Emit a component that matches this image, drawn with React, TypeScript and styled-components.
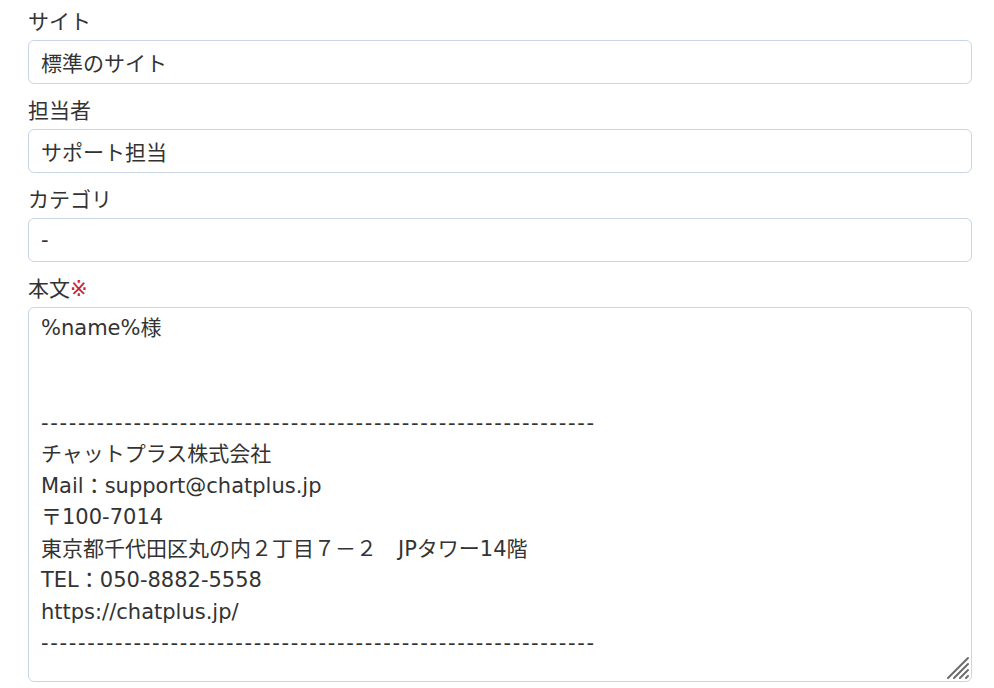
import React from 'react';
import styled, {createGlobalStyle} from 'styled-components';

const DASHES = '-'.repeat(60);

const BODY_LINES = [
  '%name%様',
  '',
  '',
  DASHES,
  'チャットプラス株式会社',
  'Mail：support@chatplus.jp',
  '〒100-7014',
  '東京都千代田区丸の内２丁目７－２　JPタワー14階',
  'TEL：050-8882-5558',
  'https://chatplus.jp/',
  DASHES,
];

const GlobalStyle = createGlobalStyle`
  html, body {
    margin: 0;
    background: #fff;
  }
  body {
    font-family: "DejaVu Sans", "Noto Sans CJK JP", sans-serif;
    color: #333;
  }
`;

export default function App() {
  return (
    <>
      <GlobalStyle/>
      <Form>
        <Field>
          <Label>サイト</Label>
          <Input readOnly value="標準のサイト"/>
        </Field>
        <Field>
          <Label>担当者</Label>
          <Input readOnly value="サポート担当"/>
        </Field>
        <Field>
          <Label>カテゴリ</Label>
          <Input readOnly value="-"/>
        </Field>
        <Field>
          <Label>本文<Required>※</Required></Label>
          <Body contentEditable suppressContentEditableWarning>
            {BODY_LINES.map((line, i) => (
              <BodyLine key={i} $rule={line === DASHES}>{line || '\u00a0'}</BodyLine>
            ))}
            <Grip width="24" height="24" viewBox="0 0 24 24">
              <g stroke="#6b6b6b" strokeWidth="2" strokeLinecap="round">
                <line x1="2" y1="22" x2="22" y2="2"/>
                <line x1="8" y1="22" x2="22" y2="8"/>
                <line x1="14" y1="22" x2="22" y2="14"/>
                <line x1="20" y1="22" x2="22" y2="20"/>
              </g>
            </Grip>
          </Body>
        </Field>
      </Form>
    </>
  );
}

const Form = styled.div`
  display: flex;
  flex-direction: column;
  gap: 10px;
  padding: 5px 22px 0 28px;
`;

const Field = styled.div`
  display: flex;
  flex-direction: column;
  gap: 5px;
`;

const Label = styled.div`
  box-sizing: border-box;
  height: 30px;
  padding-top: 4px;
  font-size: 21px;
  line-height: 26px;
`;

const Required = styled.span`
  color: #c8262c;
`;

const Input = styled.input`
  box-sizing: border-box;
  height: 44px;
  width: 100%;
  padding: 0 12px;
  border: 1px solid #c9d6e8;
  border-radius: 6px;
  font: inherit;
  font-size: 21px;
  color: #333;
  outline: none;
`;

const Body = styled.div`
  position: relative;
  box-sizing: border-box;
  height: 375px;
  width: 100%;
  padding: 5px 12px;
  border: 1px solid #c9d6e8;
  border-radius: 6px;
  font-size: 21px;
  line-height: 31.5px;
  color: #333;
  outline: none;
  overflow: hidden;
  white-space: pre-wrap;
`;

const BodyLine = styled.div<{$rule?: boolean}>`
  letter-spacing: ${p => (p.$rule ? '1.67px' : 'normal')};
`;

const Grip = styled.svg`
  position: absolute;
  right: 1px;
  bottom: 1px;
  width: 24px;
  height: 24px;
  pointer-events: none;
`;
